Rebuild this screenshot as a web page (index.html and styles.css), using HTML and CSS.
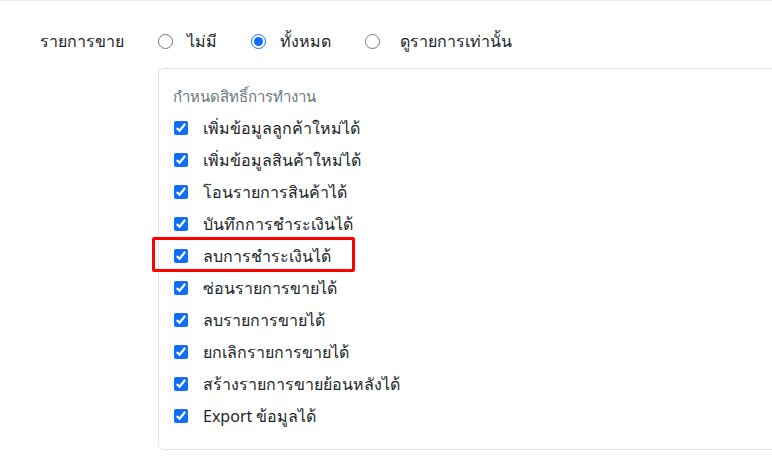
FILE: index.html
```html
<!DOCTYPE html>
<html lang="th">
<head>
<meta charset="utf-8">
<link rel="stylesheet" href="styles.css">
</head>
<body>
<div class="section">
  <div class="label">รายการขาย</div>
  <div class="content">
    <div class="options">
      <label class="opt"><input type="radio" name="sale" class="radio"><span>ไม่มี</span></label>
      <label class="opt"><input type="radio" name="sale" class="radio" checked><span>ทั้งหมด</span></label>
      <label class="opt opt-wide"><input type="radio" name="sale" class="radio"><span>ดูรายการเท่านั้น</span></label>
    </div>
    <div class="card">
      <div class="card-title">กำหนดสิทธิ์การทำงาน</div>
      <label class="item"><input type="checkbox" class="check" checked><span>เพิ่มข้อมูลลูกค้าใหม่ได้</span></label>
      <label class="item"><input type="checkbox" class="check" checked><span>เพิ่มข้อมูลสินค้าใหม่ได้</span></label>
      <label class="item"><input type="checkbox" class="check" checked><span>โอนรายการสินค้าได้</span></label>
      <label class="item"><input type="checkbox" class="check" checked><span>บันทึกการชำระเงินได้</span></label>
      <label class="item highlight"><input type="checkbox" class="check" checked><span>ลบการชำระเงินได้</span></label>
      <label class="item"><input type="checkbox" class="check" checked><span>ซ่อนรายการขายได้</span></label>
      <label class="item"><input type="checkbox" class="check" checked><span>ลบรายการขายได้</span></label>
      <label class="item"><input type="checkbox" class="check" checked><span>ยกเลิกรายการขายได้</span></label>
      <label class="item"><input type="checkbox" class="check" checked><span>สร้างรายการขายย้อนหลังได้</span></label>
      <label class="item"><input type="checkbox" class="check" checked><span>Export ข้อมูลได้</span></label>
    </div>
  </div>
</div>
</body>
</html>
```

FILE: styles.css
```css
html, body {
  margin: 0;
  padding: 0;
  background: #fff;
}
body {
  font-family: "Noto Sans", "Liberation Sans", sans-serif;
  font-size: 16px;
  color: #212529;
  overflow: hidden;
}
.section {
  border-top: 1px solid #e9ecef;
  display: flex;
  padding: 28px 0 0 40px;
}
.label {
  width: 118px;
  flex: none;
  line-height: 24px;
}
.content {
  flex: 1;
  min-width: 0;
}
.options {
  display: flex;
  align-items: center;
  height: 24px;
  gap: 34px;
}
.opt {
  display: flex;
  align-items: center;
  gap: 14px;
  line-height: 24px;
}
.opt-wide {
  gap: 20px;
}
.radio {
  width: 15px;
  height: 15px;
  margin: 0;
  accent-color: #0d6efd;
}
.card {
  margin-top: 15px;
  margin-right: -20px;
  border: 1px solid #dee2e6;
  border-radius: 6px;
  padding: 15px 14px 17px;
}
.card-title {
  color: #6c757d;
  font-size: 15px;
  line-height: 24px;
  height: 24px;
  margin-bottom: 4px;
}
.item {
  display: flex;
  align-items: center;
  gap: 15px;
  height: 32px;
  width: max-content;
  padding-left: 1px;
  position: relative;
}
.check {
  width: 14px;
  height: 14px;
  margin: 0;
  accent-color: #0d6efd;
}
.highlight::before {
  content: "";
  position: absolute;
  left: -21px;
  right: -24px;
  top: -3px;
  bottom: 0;
  border: 3px solid #ff0000;
  border-radius: 2px;
}
```
